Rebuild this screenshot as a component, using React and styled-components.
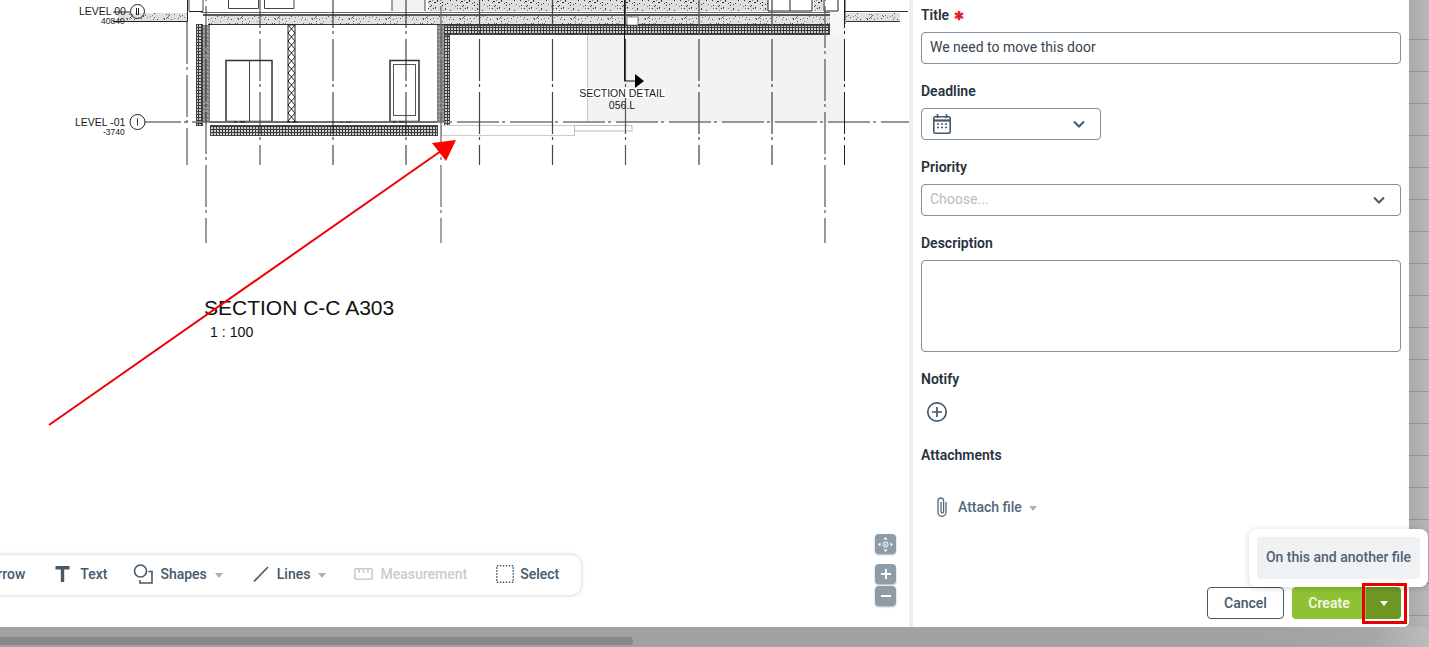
import React from "react";
import styled, { createGlobalStyle } from "styled-components";

const Global = createGlobalStyle`
  html, body { margin: 0; padding: 0; height: 100%; overflow: hidden; background: #a3a3a3; }
  #root { height: 100%; }
  * { box-sizing: border-box; }
`;

const Page = styled.div`
  width: 1429px; height: 647px; position: relative; overflow: hidden;
  background: linear-gradient(90deg, #a2a2a2 0 88%, #a6a6a6 96%, #bcbcbc 100%);
  font-family: Roboto, "Liberation Sans", sans-serif;
  display: grid; grid-template-columns: 1409px 20px; grid-template-rows: 627px 20px;
`;
const Modal = styled.div`
  background: #fff; border-bottom-right-radius: 6px;
  display: grid; grid-template-columns: 909px 4px 1fr; overflow: hidden;
`;
const Canvas = styled.div`
  position: relative; overflow: hidden; background: #fff;
`;
const Divider = styled.div`background: #ecf0f0;`;
const Drawing = styled.svg`position: absolute; left: 0; top: 0;`;
const Toolbar = styled.div`
  position: absolute; left: -12px; top: 555px; width: 593px; height: 40px;
  background: #fff; border-radius: 10px; box-shadow: 0 0 4px rgba(0,0,0,.22);
  display: flex; align-items: center; font-size: 14px; font-weight: 500;
`;
const Tool = styled.div`
  margin-left: ${p => p.$ml ?? 0}px; height: 40px; flex: none; padding-bottom: 2px;
  display: flex; align-items: center; gap: ${p => p.$gap ?? 7}px; white-space: nowrap;
  color: ${p => p.$off ? "#c6cdd3" : "#44596c"};
`;
const Caret = styled.span`
  width: 0; height: 0; margin-left: ${p => p.$ml ?? 3}px; margin-top: 2px; border-left: 4px solid transparent; border-right: 4px solid transparent;
  border-top: 5px solid #a9b3bb;
`;
const MapControls = styled.div`
  position: absolute; left: 875px; top: 534px; display: flex; flex-direction: column;
`;
const MapBtn = styled.div`
  width: 21px; height: 20px; margin-top: ${p => p.$mt ?? 0}px;
  border-radius: 4px; background: #8f9ca6; box-shadow: 0 1px 2px rgba(0,0,0,.3);
  display: flex; align-items: center; justify-content: center; color: #fff;
`;
const Panel = styled.div`
  background: #fff; padding: 7px 8px 8px 8px;
  display: flex; flex-direction: column;
`;
const Label = styled.div`
  font-size: 14px; font-weight: 600; line-height: 16px; height: 16px; color: #27323c; display: flex; gap: 5px;
`;
const Star = styled.span`color: #e8202a; font-size: 12px; line-height: 19px;`;
const Field = styled.div`
  margin-top: 9px; margin-bottom: 19px; flex: none;
  width: ${p => p.$w ?? 480}px; height: ${p => p.$h ?? 32}px; border: 1px solid #7e8f9d; border-radius: 4px; padding: 0 8px 2px;
  display: flex; align-items: center; justify-content: space-between; font-size: 14px; color: #39444e;
`;
const Placeholder = styled.span`color: #b4bec6;`;
const IconWrap = styled.span`
  display: inline-flex; color: #44596c; margin-left: ${p => p.$l ?? 0}px; margin-right: ${p => p.$r ?? 0}px; margin-top: ${p => p.$t ?? 2}px;
`;
const AddRow = styled.div`margin: 14px 0 24px 5px; height: 22px; display: flex; color: #44596c;`;
const Attach = styled.div`
  margin: 29px 0 0 14px; height: 30px; display: flex; align-items: center; gap: 9px; color: #52687a; font-size: 14px; font-weight: 500;
`;
const Footer = styled.div`
  margin-top: auto; height: 32px; display: flex; justify-content: flex-end; flex: none;
`;
const Cancel = styled.div`
  width: 77px; height: 32px; border: 1px solid #44596c; border-radius: 4px; color: #44596c; font-size: 14px; font-weight: 500;
  display: flex; align-items: center; justify-content: center; margin-right: 8px;
`;
const Create = styled.div`
  width: 74px; height: 32px; background: #8fc232; border-radius: 4px 0 0 4px; color: #f0f7e0; font-size: 14px; font-weight: 600;
  display: flex; align-items: center; justify-content: center;
`;
const Split = styled.div`
  width: 35px; height: 32px; background: #6d9623; border-radius: 0 4px 4px 0; display: flex; align-items: center; justify-content: center;
`;
const WhiteCaret = styled.span`
  width: 0; height: 0; border-left: 4px solid transparent; border-right: 4px solid transparent; border-top: 5px solid #fff;
`;
const Highlight = styled.div`
  position: absolute; left: 1362px; top: 583px; width: 45px; height: 41px; border: 3px solid #e60000; z-index: 5;
`;
const Menu = styled.div`
  position: absolute; left: 1249px; top: 529px; width: 179px; height: 58px; background: #fff; border-radius: 8px;
  box-shadow: 0 1px 6px rgba(0,0,0,.18); padding: 8px; z-index: 4;
`;
const MenuItem = styled.div`
  width: 163px; height: 42px; padding-bottom: 2px; background: #eff1f3; border-radius: 3px; display: flex; align-items: center; justify-content: center;
  font-size: 14px; font-weight: 500; color: #4f6374; white-space: nowrap;
`;
const Side = styled.div`
  background-image: linear-gradient(90deg, #aaaaaa, #b8b8b8);
  position: relative;
  &::after {
    content: ""; display: block; height: 100%;
    background: repeating-linear-gradient(180deg, transparent 0 31px, rgba(0,0,0,.17) 31px 32px);
    background-position: 0 8px;
  }
`;
const BottomBar = styled.div`
  grid-column: 1 / 3; padding-top: 10px;
`;
const ScrollThumb = styled.div`
  width: 633px; height: 8px; background: #888; border-radius: 0 4px 4px 0;
`;

/* dash-dot grid line: phase chosen so the dots land where the plan has them */
const Grid = ({ x, y1 = -14, y2 = 165, w = 1, c = "#222" }) => (
  <line x1={x} x2={x} y1={y1} y2={y2} stroke={c} strokeWidth={w} strokeDasharray="42 3 3 5" />
);

const txt = { fontFamily: "'Liberation Sans', Arial, sans-serif", fill: "#1a1a1a" };

/* irregular stipple for the concrete hatch */
function noise(size, count, seed, fills) {
  const out = [];
  let s = seed;
  const next = () => (s = (s * 1103515245 + 12345) & 0x7fffffff);
  for (let i = 0; i < count; i++) {
    const x = (next() >> 8) % size;
    const y = (next() >> 8) % size;
    out.push(<rect key={i} x={x} y={y} width="1" height="1" fill={fills[i % fills.length]} />);
  }
  return out;
}

function Plan() {
  return (
    <Drawing width="909" height="627" viewBox="0 0 909 627">
      <defs>
        <pattern id="mesh" width="3" height="3" patternUnits="userSpaceOnUse">
          <rect width="3" height="3" fill="#cfcfcf" />
          <path d="M0 .5H3M.5 0V3" stroke="#3a3a3a" strokeWidth="1" />
        </pattern>
        <pattern id="speck" width="37" height="23" patternUnits="userSpaceOnUse">
          <rect width="37" height="23" fill="#e0e0e0" />
          {noise(23, 46, 7, ["#444", "#666", "#888"])}
          <g transform="translate(14 0)">{noise(23, 40, 19, ["#555", "#777"])}</g>
        </pattern>
        <pattern id="dense" width="32" height="32" patternUnits="userSpaceOnUse">
          <rect width="32" height="32" fill="#dedede" />
          {noise(32, 300, 11, ["#222", "#444", "#333", "#777"])}
        </pattern>
        <pattern id="grain" width="4" height="4" patternUnits="userSpaceOnUse">
          <rect width="4" height="4" fill="#8c8c8c" />
          <rect x="1" y="1" width="1" height="1" fill="#555" />
          <rect x="3" y="3" width="1" height="1" fill="#bbb" />
        </pattern>
        <pattern id="cross" x="288" y="25" width="7" height="8" patternUnits="userSpaceOnUse">
          <path d="M0 0L7 8M7 0L0 8" stroke="#222" strokeWidth="1" />
        </pattern>
      </defs>

      {/* shaded bay */}
      <rect x="587" y="35" width="258" height="87" fill="#f2f2f2" />
      <rect x="826" y="12" width="19" height="23" fill="#f7f7f7" />
      <path d="M587.5 35V122" stroke="#c8c8c8" />

      {/* stippled upper floor */}
      <rect x="392" y="0" width="33" height="11" fill="#f2f2f2" />
      <rect x="428" y="0" width="340" height="11" fill="url(#dense)" />
      <rect x="814" y="0" width="9" height="11" fill="url(#dense)" />

      {/* left and right slab ends */}
      <rect x="118" y="13" width="69" height="9" fill="url(#speck)" />
      <path d="M113 21.5H187.5V0M189 11.5H203" stroke="#222" fill="none" />
      <rect x="846" y="13" width="54" height="9" fill="url(#speck)" />
      <path d="M845 11.5H908M846 21.5H900M845 0V24" stroke="#333" fill="none" />

      {/* main slab */}
      <rect x="208" y="16" width="622" height="9" fill="url(#speck)" />
      <path d="M201 12.5H830" stroke="#666" />
      <path d="M203 15H830" stroke="#222" strokeWidth="1.6" />
      <path d="M208 24.5H830" stroke="#333" />
      <rect x="627" y="17" width="11" height="8" fill="#fff" stroke="#444" strokeWidth=".6" />

      {/* top openings */}
      <path d="M189 0V11M203 0V11M228.5 0V8.5H258.5V0M264.5 0V8.5H294V0M392 0V11M425 0V11" stroke="#444" fill="none" />
      <path d="M768 0V11H812V0M790 0V11M824 0V11H838V0" stroke="#222" fill="#fff" />

      {/* walls */}
      <rect x="196.5" y="24.5" width="6" height="101" fill="url(#mesh)" stroke="#444" />
      <rect x="203" y="25" width="7" height="97" fill="url(#grain)" />
      <rect x="437" y="25" width="7" height="97" fill="url(#grain)" />
      <rect x="444.5" y="35" width="5" height="90.5" fill="url(#mesh)" stroke="#444" />
      <rect x="444.5" y="25.5" width="385" height="9" fill="url(#mesh)" stroke="#444" />
      <rect x="210.5" y="125.5" width="227" height="10" fill="url(#mesh)" stroke="#444" />
      <path d="M210 122H437" stroke="#555" strokeWidth="2" />

      {/* cross-braced column */}
      <rect x="288" y="25" width="7" height="97" fill="url(#cross)" stroke="#222" />

      {/* doors */}
      <rect x="226" y="60.5" width="46" height="61" fill="#fff" stroke="#333" strokeWidth="1.5" />
      <path d="M249.5 60V122" stroke="#444" />
      <rect x="390" y="60.5" width="29" height="61" fill="#fff" stroke="#333" strokeWidth="1.5" />
      <rect x="393.5" y="64.5" width="22" height="51" fill="none" stroke="#555" />

      {/* level line and footing outline */}
      <line x1="145" x2="909" y1="122" y2="122" stroke="#777" strokeDasharray="42 3 3 5" strokeDashoffset="6" strokeWidth="1.5" />
      <rect x="441.5" y="125.5" width="133" height="10" fill="#fff" stroke="#ccc" />
      <rect x="574.5" y="125.5" width="57.5" height="5.5" fill="none" stroke="#bbb" />

      {/* grid lines */}
      <Grid x={187} y1={22} c="#333" />
      <Grid x={206} y1={-47} y2={243} c="#333" />
      <Grid x={260} c="#333" />
      <Grid x={333} />
      <Grid x={406} />
      <Grid x={441} y1={-47} y2={243} c="#666" w={1.2} />
      <Grid x={479.5} c="#444" w={1.2} />
      <Grid x={552.5} c="#444" w={1.2} />
      <Grid x={625.5} c="#555" w={1.2} />
      <Grid x={699} c="#666" w={1.5} />
      <Grid x={772} c="#666" w={1.5} />
      <Grid x={825} y1={-47} y2={243} c="#555" w={1.2} />
      <Grid x={844.5} />

      {/* section mark */}
      <path d="M624.5 0V81H636" stroke="#111" fill="none" />
      <path d="M635 74L644 81L635 88Z" fill="#000" />
      <rect x="579" y="88" width="86" height="10" fill="#fff" />
      <text x="622" y="97" textAnchor="middle" fontSize="10.5" style={txt}>SECTION DETAIL</text>
      <text x="622" y="109" textAnchor="middle" fontSize="10.5" style={txt}>056.L</text>

      {/* level labels */}
      <text x="79" y="15" fontSize="10.5" style={txt}>LEVEL 00</text>
      <text x="101" y="24" fontSize="8.5" style={txt}>40840</text>
      <circle cx="137.5" cy="11.5" r="7" fill="none" stroke="#222" />
      <path d="M136.5 8V15M138.5 8V15M113 12H130" stroke="#222" />
      <text x="75" y="126" fontSize="10.5" style={txt}>LEVEL -01</text>
      <text x="103" y="135" fontSize="8.5" style={txt}>-3740</text>
      <circle cx="137.5" cy="122" r="7.5" fill="none" stroke="#222" />
      <path d="M137.5 118.5V125.5" stroke="#222" />

      <text x="204" y="315" fontSize="21" style={{ ...txt, fill: "#111" }}>SECTION C-C A303</text>
      <text x="210" y="337" fontSize="14.2" style={{ ...txt, fill: "#111" }}>1 : 100</text>

      {/* red arrow */}
      <line x1="49" y1="425" x2="441" y2="151" stroke="#f00000" strokeWidth="2" />
      <path d="M456 140L432 143L446 161Z" fill="#ff0000" />
    </Drawing>
  );
}

const TextIcon = () => (
  <svg width="15" height="16" viewBox="0 0 15 16"><path d="M.5 0H14.5V3.4H9.2V16H5.8V3.4H.5Z" fill="#44596c" /></svg>
);
const ShapesIcon = () => (
  <svg width="20" height="20" viewBox="0 0 20 20" fill="none" stroke="#44596c" strokeWidth="1.6">
    <circle cx="7.5" cy="7" r="6" /><path d="M15.5 7.5H19V19H7V16" />
  </svg>
);
const LineIcon = () => (
  <svg width="16" height="16" viewBox="0 0 16 16" fill="none" stroke="#44596c" strokeWidth="1.6"><path d="M1 15.5L15 1" /></svg>
);
const RulerIcon = () => (
  <svg width="19" height="12" viewBox="0 0 19 12" fill="none" stroke="#c6cdd3" strokeWidth="1.6">
    <rect x=".8" y=".8" width="17.4" height="10.4" rx="1" /><path d="M5 1V5M9.5 1V5M14 1V5" />
  </svg>
);
const SelectIcon = () => (
  <svg width="18" height="18" viewBox="0 0 18 18" fill="none" stroke="#44596c" strokeWidth="1.5" strokeDasharray="1.5 1.5"><rect x=".75" y=".75" width="16.5" height="16.5" /></svg>
);
const Chevron = () => (
  <svg width="14" height="8" viewBox="0 0 14 8" fill="none" stroke="#44596c" strokeWidth="2"><path d="M2 1.5L7 6.5L12 1.5" /></svg>
);
const Calendar = () => (
  <svg width="18" height="20" viewBox="0 0 18 20" fill="none" stroke="#44596c" strokeWidth="1.6">
    <rect x=".8" y="2.8" width="16.4" height="16.4" rx="1.5" />
    <path d="M4.5 0V4M13.5 0V4" /><path d="M1 6.5H17" strokeWidth="2.2" />
    <path d="M4 10H6M8 10H10M12 10H14M4 13.5H6M8 13.5H10M12 13.5H14" strokeWidth="1.4" />
  </svg>
);
const Plus = () => (
  <svg width="22" height="22" viewBox="0 0 22 22" fill="none" stroke="#44596c" strokeWidth="1.7">
    <circle cx="11" cy="11" r="9.2" /><path d="M11 6V16M6 11H16" />
  </svg>
);
const Clip = () => (
  <svg width="14" height="20" viewBox="0 0 14 20" fill="none" stroke="#52687a" strokeWidth="1.3">
    <path d="M11 5V15A4 4.4 0 0 1 3 15V4A2.8 3 0 0 1 8.6 4V14.5A1.3 1.3 0 0 1 6 14.5V5" />
  </svg>
);
const MoveIcon = () => (
  <svg width="15" height="15" viewBox="0 0 15 15" fill="#fff">
    <circle cx="7.5" cy="7.5" r="2.6" fill="none" stroke="#fff" />
    <circle cx="7.5" cy="7.5" r="1" />
    <path d="M7.5 0L9.5 2.4H5.5ZM7.5 15L5.5 12.6H9.5ZM0 7.5L2.4 5.5V9.5ZM15 7.5L12.6 9.5V5.5Z" />
  </svg>
);
const MiniPlus = () => (
  <svg width="10" height="10" viewBox="0 0 10 10" stroke="#fff" strokeWidth="2"><path d="M5 0V10M0 5H10" /></svg>
);
const MiniMinus = () => (
  <svg width="10" height="10" viewBox="0 0 10 10" stroke="#fff" strokeWidth="2"><path d="M0 5H10" /></svg>
);

export default function App() {
  return (
    <Page>
      <Global />
      <Modal>
        <Canvas>
          <Plan />
          <Toolbar>
            <Tool>Arrow</Tool>
            <Tool $ml={30} $gap={10}><TextIcon />Text</Tool>
            <Tool $ml={26} $gap={7}><ShapesIcon />Shapes<Caret $ml={1} /></Tool>
            <Tool $ml={30} $gap={8}><LineIcon />Lines<Caret $ml={0} /></Tool>
            <Tool $ml={28} $gap={7} $off><RulerIcon />Measurement</Tool>
            <Tool $ml={29} $gap={6}><SelectIcon />Select</Tool>
          </Toolbar>
          <MapControls>
            <MapBtn><MoveIcon /></MapBtn>
            <MapBtn $mt={10}><MiniPlus /></MapBtn>
            <MapBtn $mt={2}><MiniMinus /></MapBtn>
          </MapControls>
        </Canvas>
        <Divider />
        <Panel>
          <Label>Title <Star>✱</Star></Label>
          <Field>We need to move this door</Field>
          <Label>Deadline</Label>
          <Field $w={180}><IconWrap $l={3}><Calendar /></IconWrap><IconWrap $r={6}><Chevron /></IconWrap></Field>
          <Label>Priority</Label>
          <Field><Placeholder>Choose...</Placeholder><IconWrap $r={6}><Chevron /></IconWrap></Field>
          <Label>Description</Label>
          <Field $h={92} />
          <Label>Notify</Label>
          <AddRow><Plus /></AddRow>
          <Label>Attachments</Label>
          <Attach><Clip />Attach file<Caret $ml={-2} /></Attach>
          <Footer>
            <Cancel>Cancel</Cancel>
            <Create>Create</Create>
            <Split><WhiteCaret /></Split>
          </Footer>
        </Panel>
      </Modal>
      <Side />
      <BottomBar><ScrollThumb /></BottomBar>
      <Menu><MenuItem>On this and another file</MenuItem></Menu>
      <Highlight />
    </Page>
  );
}
